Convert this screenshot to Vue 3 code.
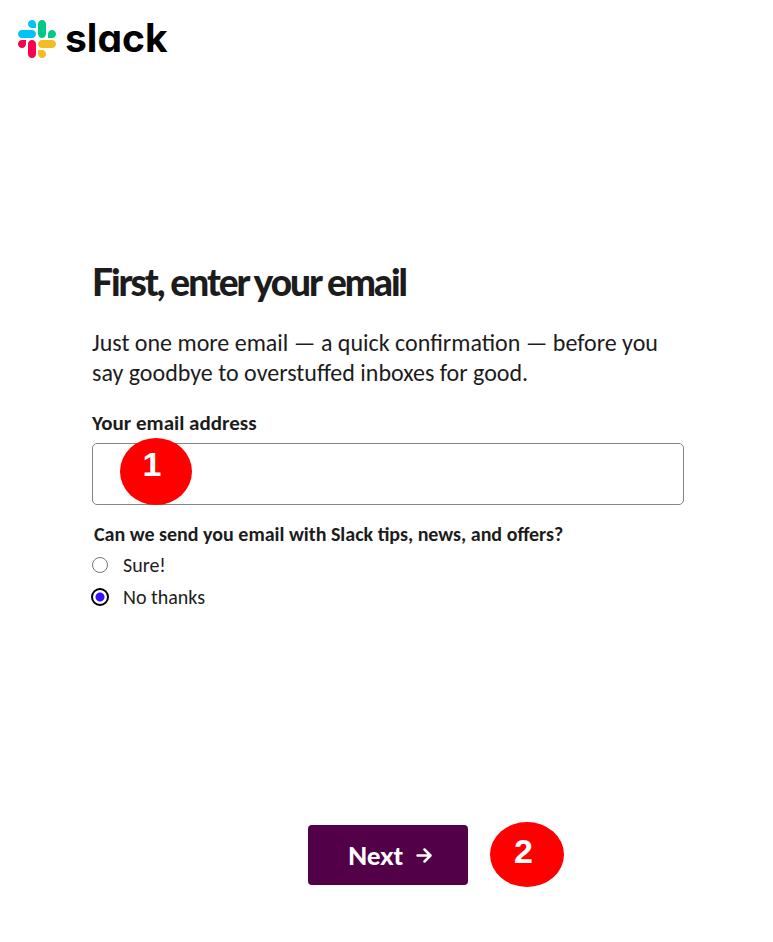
<script setup>
import { ref } from 'vue'

const email = ref('')
const offers = ref('no')
const choices = [
  { value: 'yes', label: 'Sure!' },
  { value: 'no', label: 'No thanks' },
]
</script>

<template>
  <div class="page">
    <header class="header">
      <a class="brand" href="#">
        <svg class="mark" viewBox="0 0 122.8 122.8" aria-hidden="true">
          <path fill="#f8004c" d="M25.800 77.600c0 7.100-5.800 12.900-12.900 12.900S0 84.700 0 77.600s5.800-12.900 12.900-12.900h12.900v12.900zm6.500 0c0-7.100 5.800-12.900 12.900-12.900s12.900 5.800 12.900 12.900v32.300c0 7.100-5.800 12.900-12.900 12.900s-12.900-5.800-12.900-12.900V77.600z" />
          <path fill="#00c3f8" d="M45.200 25.800c-7.100 0-12.900-5.800-12.900-12.900S38.100 0 45.200 0s12.900 5.800 12.900 12.900v12.900H45.200zm0 6.500c7.100 0 12.900 5.800 12.900 12.900s-5.800 12.900-12.900 12.900H12.900C5.800 58.100 0 52.300 0 45.200s5.800-12.900 12.900-12.900h32.300z" />
          <path fill="#00c886" d="M97 45.200c0-7.100 5.800-12.900 12.900-12.900s12.900 5.800 12.900 12.900-5.800 12.900-12.900 12.900H97V45.200zm-6.500 0c0 7.100-5.800 12.900-12.900 12.900s-12.900-5.800-12.900-12.900V12.900C64.700 5.800 70.500 0 77.600 0s12.900 5.800 12.900 12.900v32.300z" />
          <path fill="#f4bc20" d="M77.600 97c7.100 0 12.900 5.800 12.900 12.900s-5.800 12.900-12.900 12.900-12.900-5.800-12.900-12.900V97h12.900zm0-6.500c-7.100 0-12.900-5.800-12.900-12.900s5.800-12.900 12.900-12.900h32.300c7.100 0 12.900 5.800 12.900 12.900s-5.800 12.900-12.900 12.900H77.600z" />
        </svg>
        <span class="wordmark">slack</span>
      </a>
    </header>

    <main class="content">
      <h1 class="title">First, enter your email</h1>
      <p class="lead">
        Just one more email — a quick confirmation — before you say goodbye to overstuffed inboxes for good.
      </p>

      <form class="form" @submit.prevent>
        <label class="label" for="email">Your email address</label>
        <div class="field">
          <input id="email" v-model="email" class="input" type="email" />
          <span class="badge badge-field">1</span>
        </div>

        <fieldset class="choices">
          <legend class="legend">Can we send you email with Slack tips, news, and offers?</legend>
          <label v-for="choice in choices" :key="choice.value" class="choice">
            <input v-model="offers" class="radio" type="radio" name="offers" :value="choice.value" />
            <span>{{ choice.label }}</span>
          </label>
        </fieldset>

        <div class="actions">
          <div class="action">
            <button class="next" type="submit">
              <span>Next</span>
              <svg class="arrow" viewBox="0 0 16 16" aria-hidden="true">
                <path d="M1.500 8.500H14M8.500 2.500l6 6-6 6" />
              </svg>
            </button>
            <span class="badge badge-next">2</span>
          </div>
        </div>
      </form>
    </main>
  </div>
</template>

<style>
body {
  margin: 0;
  background: #fff;
}
</style>

<style scoped>
.page {
  box-sizing: border-box;
  min-height: 100vh;
  color: #1d1c1d;
  font-family: Carlito, Lato, sans-serif;
}

.header {
  display: flex;
  padding: 20px 18px 0;
}

.brand {
  display: flex;
  align-items: center;
  gap: 9px;
  height: 38px;
  color: #000;
  text-decoration: none;
}

.mark {
  width: 38px;
  height: 38px;
}

.wordmark {
  height: 38px;
  font-family: Inter, sans-serif;
  font-size: 39px;
  font-weight: 700;
  line-height: 36px;
  font-feature-settings: "cv11";
}

.content {
  padding: 200px 89px 56px 92px;
}

.title {
  margin: 0;
  font-family: Lato, sans-serif;
  font-size: 37px;
  font-weight: 900;
  line-height: 48px;
  letter-spacing: -2px;
}

.lead {
  margin: 22px 0 0;
  font-size: 24px;
  line-height: 30px;
}

.form {
  margin-top: 23px;
}

.label {
  display: block;
  font-size: 21px;
  font-weight: 700;
  line-height: 24px;
}

.field {
  position: relative;
  margin-top: 8px;
}

.input {
  display: block;
  box-sizing: border-box;
  width: 100%;
  height: 62px;
  padding: 0 16px;
  border: 1px solid #868686;
  border-radius: 5px;
  outline: none;
  background: #fff;
  color: inherit;
  font: inherit;
  font-size: 24px;
}

.badge {
  position: absolute;
  box-sizing: border-box;
  border-radius: 50%;
  background: #f00;
  color: #fff;
  font-family: "Liberation Sans", sans-serif;
  font-size: 34px;
  font-weight: 700;
  line-height: 52px;
  text-align: center;
}

.badge-field {
  top: -5px;
  left: 28px;
  width: 72px;
  height: 67px;
  padding-right: 8px;
}

.badge-next {
  top: -3px;
  left: 182px;
  width: 74px;
  height: 65px;
  padding: 3px 7px 0 0;
}

.choices {
  display: flex;
  flex-direction: column;
  min-width: 0;
  margin: 17px 0 0;
  padding: 0;
  border: 0;
}

.legend {
  padding: 0 2px;
  margin-bottom: 3px;
  font-size: 20px;
  font-weight: 700;
  line-height: 24px;
}

.choice {
  display: flex;
  align-items: center;
  gap: 15px;
  font-size: 20px;
  line-height: 32px;
}

.radio {
  flex: none;
  width: 16px;
  height: 16px;
  margin: 0;
  border: 1px solid #767676;
  border-radius: 50%;
  appearance: none;
  background: #fff;
}

.radio:checked {
  border-color: #fff;
  outline: 2px solid #000;
  outline-offset: -1px;
  background: radial-gradient(circle, #3512ff 4px, #fff 5px);
}

.actions {
  display: flex;
  justify-content: center;
  margin-top: 212px;
}

.action {
  position: relative;
}

.next {
  display: flex;
  align-items: center;
  justify-content: center;
  gap: 13px;
  width: 160px;
  height: 60px;
  padding: 0 0 0 4px;
  border: 0;
  border-radius: 4px;
  background: #520048;
  color: #fff;
  font-family: Lato, sans-serif;
  font-size: 25px;
  font-weight: 900;
}

.arrow {
  width: 16px;
  height: 16px;
  fill: none;
  stroke: currentColor;
  stroke-width: 2.5;
  stroke-linecap: round;
  stroke-linejoin: round;
}
</style>
